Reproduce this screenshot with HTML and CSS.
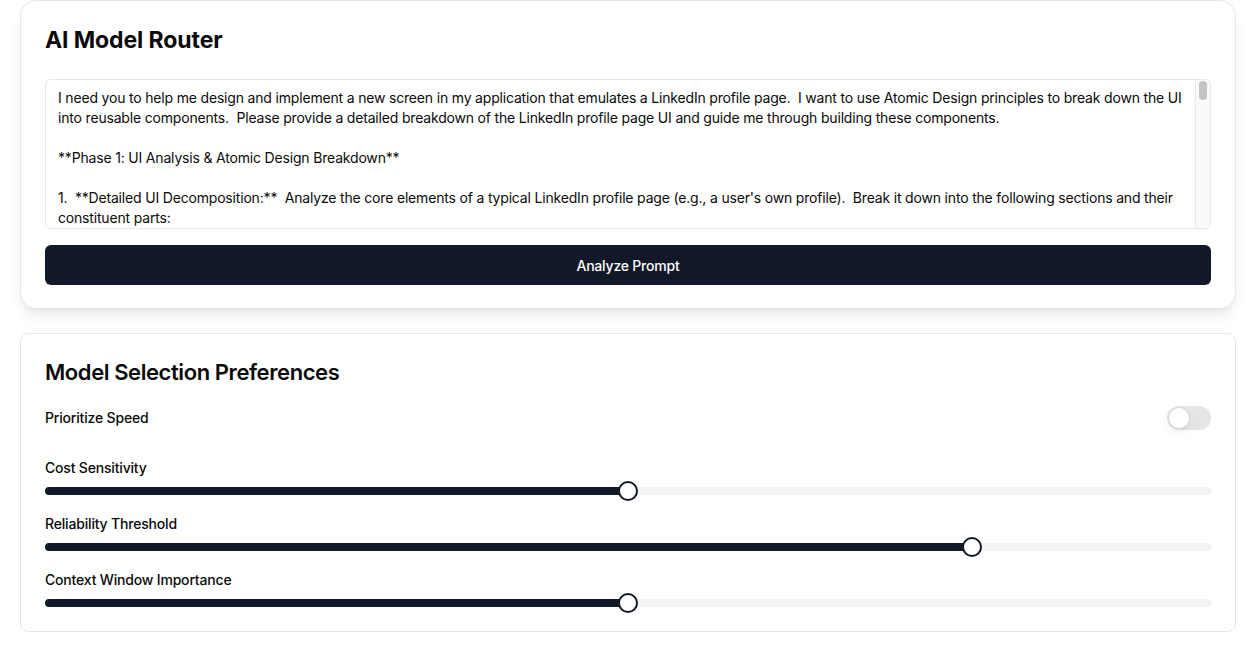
FILE: index.html
```
<!DOCTYPE html>
<html lang="en">
<head>
<meta charset="utf-8">
<title>AI Model Router</title>
<link rel="stylesheet" href="styles.css">
</head>
<body>
<main class="page">
  <section class="card card-main">
    <h1 class="title">AI Model Router</h1>
    <div class="prompt-wrap">
      <textarea class="prompt" readonly>I need you to help me design and implement a new screen in my application that emulates a LinkedIn profile page.  I want to use Atomic Design principles to break down the UI into reusable components.  Please provide a detailed breakdown of the LinkedIn profile page UI and guide me through building these components.

**Phase 1: UI Analysis &amp; Atomic Design Breakdown**

1.  **Detailed UI Decomposition:**  Analyze the core elements of a typical LinkedIn profile page (e.g., a user's own profile).  Break it down into the following sections and their constituent parts:

    *   **Header Section:** Profile banner, profile photo, name, headline, location, connections count.
    *   **About Section:** Summary text, "see more" expansion.
    *   **Experience Section:** Company logo, job title, company name, dates, description.
    *   **Education Section:** School logo, degree, field of study, dates.
    *   **Skills Section:** Skill names, endorsements.</textarea>
      <div class="scrollbar"><div class="scrollbar-thumb"></div></div>
    </div>
    <button class="btn-primary" type="button">Analyze Prompt</button>
  </section>

  <section class="card card-prefs">
    <h2 class="title title-prefs">Model Selection Preferences</h2>
    <div class="toggle-row">
      <span class="label">Prioritize Speed</span>
      <span class="switch"><span class="switch-thumb"></span></span>
    </div>
    <div class="slider-block">
      <div class="label">Cost Sensitivity</div>
      <div class="slider">
        <div class="track"><div class="fill" style="width:50%"></div></div>
        <div class="thumb" style="left:calc(10px + (100% - 20px) * 0.5)"></div>
      </div>
    </div>
    <div class="slider-block">
      <div class="label">Reliability Threshold</div>
      <div class="slider">
        <div class="track"><div class="fill" style="width:80%"></div></div>
        <div class="thumb" style="left:calc(10px + (100% - 20px) * 0.8)"></div>
      </div>
    </div>
    <div class="slider-block">
      <div class="label">Context Window Importance</div>
      <div class="slider">
        <div class="track"><div class="fill" style="width:50%"></div></div>
        <div class="thumb" style="left:calc(10px + (100% - 20px) * 0.5)"></div>
      </div>
    </div>
  </section>
</main>
</body>
</html>
```
FILE: styles.css
```
* { box-sizing: border-box; }
html, body { margin: 0; padding: 0; background: #ffffff; }
body {
  font-family: Inter, "Noto Sans", "Liberation Sans", sans-serif;
  color: #0a0a0a;
  letter-spacing: -0.18px;
}
.page {
  padding: 0 21px 0 20px;
  display: flex;
  flex-direction: column;
  gap: 24px;
}
.card {
  background: #fff;
  border: 1px solid #e5e7eb;
  padding: 23px 24px 23px 24px;
}
.card-main {
  border-radius: 16px;
  box-shadow: 0 10px 15px -3px rgba(0,0,0,0.08), 0 4px 6px -4px rgba(0,0,0,0.08);
}
.card-prefs {
  border-radius: 8px;
  padding-top: 22px;
  padding-bottom: 18px;
}
.title {
  margin: 0 0 23px 0;
  font-size: 23px;
  line-height: 32px;
  font-weight: 700;
  letter-spacing: -0.1px;
  color: #0a0a0a;
}
.title-prefs {
  font-size: 22px;
  font-weight: 600;
  letter-spacing: -0.42px;
  margin-bottom: 18px;
}
.prompt-wrap {
  position: relative;
}
.prompt {
  display: block;
  width: 100%;
  height: 150px;
  margin: 0;
  padding: 8px 28px 8px 12px;
  border: 1px solid #e5e7eb;
  border-radius: 6px;
  font-family: inherit;
  font-size: 14px;
  line-height: 20px;
  letter-spacing: -0.18px;
  color: #0a0a0a;
  background: #fff;
  resize: none;
  overflow: hidden;
  outline: none;
}
.scrollbar {
  position: absolute;
  top: 1px;
  right: 1px;
  bottom: 1px;
  width: 15px;
  background: #fafafa;
  border-left: 1px solid #e9e9e9;
  border-radius: 0 5px 5px 0;
}
.scrollbar-thumb {
  margin: 1px 0 0 3px;
  width: 8px;
  height: 19px;
  border-radius: 4px;
  background: #c3c3c3;
}
.btn-primary {
  display: block;
  width: 100%;
  height: 40px;
  margin-top: 16px;
  border: 0;
  border-radius: 6px;
  background: #111827;
  color: #fff;
  font-family: inherit;
  font-size: 14px;
  font-weight: 500;
  letter-spacing: -0.2px;
}
.label {
  font-size: 14px;
  line-height: 20px;
  font-weight: 500;
  color: #0a0a0a;
}
.toggle-row {
  display: flex;
  align-items: center;
  justify-content: space-between;
  height: 24px;
  margin-bottom: 28px;
}
.switch {
  position: relative;
  width: 44px;
  height: 24px;
  border-radius: 12px;
  background: #e5e5e5;
}
.switch-thumb {
  position: absolute;
  left: 2px;
  top: 2px;
  width: 20px;
  height: 20px;
  border-radius: 50%;
  background: #fff;
  box-shadow: 0 0 0 1px #d9d9d9, 0 4px 8px rgba(0,0,0,0.08);
}
.slider-block { margin-bottom: 13px; }
.slider-block:last-child { margin-bottom: 0; }
.slider {
  position: relative;
  height: 20px;
  margin-top: 3px;
  display: flex;
  align-items: center;
}
.track {
  width: 100%;
  height: 8px;
  border-radius: 4px;
  background: #f3f3f2;
  overflow: hidden;
}
.fill {
  height: 100%;
  background: #111827;
}
.thumb {
  position: absolute;
  top: 0;
  width: 20px;
  height: 20px;
  margin-left: -10px;
  border-radius: 50%;
  background: #fff;
  border: 2px solid #111827;
}
```
